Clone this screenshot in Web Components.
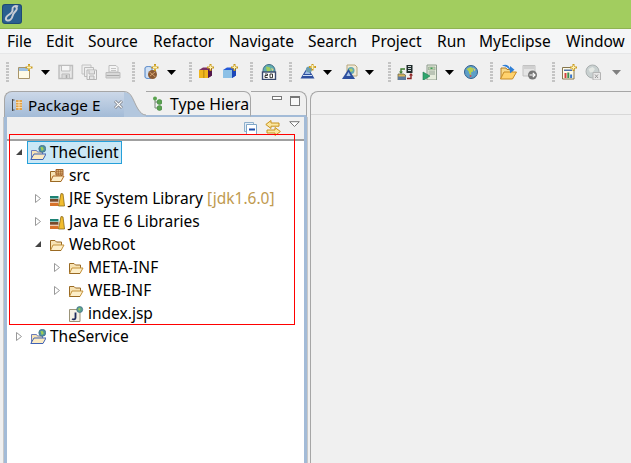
<!DOCTYPE html>
<html><head><meta charset="utf-8"><title>MyEclipse</title>
<style>
html,body{margin:0;padding:0;height:100%;overflow:hidden;background:#f0f0f0;font-family:"Noto Sans","Open Sans",sans-serif;font-size:15.5px;color:#000}
ide-app{height:463px}
</style></head><body>
<ide-app></ide-app>
<script>
const openFolder=(a='#c4923a')=>`<path d="M1.500 13.500V3.500h4.500l1.500 1.500h5V8" fill="#f7e3b5" stroke="#9a6a24"/><path d="M1.500 13.500L4 8h11l-3 5.500z" fill="#fdeec8" stroke="${a}" stroke-linejoin="round"/><path d="M1.500 13.500h10.500" stroke="#9a6a24"/>`;
const projFolder=`<path d="M1.500 14V5.500h5l1 1.500h5V9" fill="#f7e3b5" stroke="#6c7cb8"/><path d="M.8 14.500L4 9H16l-3 5.500z" fill="#fbeac2" stroke="#3f62b5" stroke-linejoin="round"/><circle cx="12.300" cy="3.800" r="3.500" fill="#4f93a0" stroke="#3d6a86" stroke-width=".7"/><path d="M10.500 2l2.500.2.700 2.500-2 1.200z" fill="#a3cf52"/>`;
const spark=(x,y)=>`<path d="M${x} ${y-3.500}v7M${x-3.500} ${y}h7" stroke="#c99a1d" stroke-width="2"/><path d="M${x} ${y-2}v4M${x-2} ${y}h4" stroke="#fff3b0" stroke-width="1"/>`;
const cube=(a,b,c)=>`<path d="M1 6l4-2.500h9v8L10 14H1z" fill="${a}"/><path d="M1 6h9v8H1z" fill="${b}"/><path d="M10 6l4-2.500v8L10 14z" fill="${c}"/>`;
const ICONS={
 newfile:`<path d="M1.500 3.500h11v11h-11z" fill="#fffbe6" stroke="#a8956a"/><path d="M2 4h10v3H2z" fill="#9cc0e4"/>${spark(12,3.500)}`,
 save:`<path d="M1 1.500h13.500v13H1z" fill="#e8e8e8" stroke="#bdbdbd" stroke-width="1.400"/><path d="M3.500 2v5h8.500V2" fill="#f6f6f6" stroke="#bdbdbd"/><path d="M4 10h7.500v4.500H4z" fill="#d8d8d8" stroke="#bdbdbd"/><path d="M8.500 11v3" stroke="#aaa" stroke-width="1.500"/>`,
 saveall:`<path d="M1 1h9v9H1z" fill="#eee" stroke="#c2c2c2"/><path d="M3.500 3.500h9v9h-9z" fill="#eee" stroke="#bcbcbc"/><path d="M6 6h9.500v9.500H6z" fill="#f2f2f2" stroke="#b5b5b5"/><path d="M8 6.500v3.500h5.500V6.500M8.500 12h4.500v3.500H8.500z" fill="#e4e4e4" stroke="#b5b5b5"/>`,
 print:`<path d="M4 1.500h7l2 2V8H4z" fill="#f4f4f4" stroke="#bdbdbd"/><path d="M6 4.500h5M6 6.500h5" stroke="#c4c4c4"/><path d="M1 8.500h14v5.500H1z" fill="#d8d8d8" stroke="#bdbdbd"/><path d="M1.500 11.500h13" stroke="#aaa"/>`,
 wsnew:`<path d="M2 4c0-2 7-2 7 0v9c0 2-7 2-7 0z" fill="#cfe0f4" stroke="#4b7fc4"/><circle cx="9.500" cy="10.500" r="4.500" fill="#8a5a33"/><path d="M6.500 8l6 5M7 12l5-4" stroke="#d9a878" stroke-width=".9"/>${spark(12,3.500)}`,
 pkg:`${cube('#7a2f63','#f0b51e','#52184b')}<path d="M5 6h1.500v8H5z" fill="#c89413"/>${spark(12.500,3.500)}`,
 cls:`${cube('#2459d8','#8cc0e6','#1c47b8')}${spark(12.500,3.500)}`,
 ws:`<circle cx="8" cy="6.500" r="6" fill="#62aeb0" stroke="#3d6a86"/><path d="M5 2.500l4 1 1 3-4 1.500z" fill="#a4cf59"/><path d="M10 4l2.500 1-1 2.500z" fill="#e7d480"/><rect x="1.500" y="8" width="13" height="7.500" fill="#fff" stroke="#3a4a6e" stroke-width="1.400"/><path d="M4 10h2.500v1.500H4v2h2.700M9 10h2.500v3.700H9z" fill="none" stroke="#222" stroke-width=".9"/>`,
 srv:`<path d="M7.500 3L14.500 14.500H.5z" fill="#2d4f9f"/><path d="M7.500 5l3 5H4.500z" fill="#9fbde6"/><path d="M3 11.500h9" stroke="#cfe0f4"/><circle cx="9" cy="5.500" r="3" fill="#6c9fb0"/>${spark(12.500,3)}`,
 browse:`<path d="M5 1h8l2 2v9H5z" fill="#f2ead6" stroke="#b6a67c"/><circle cx="9" cy="6.500" r="3.500" fill="#63a9b4"/><path d="M7 5l3-.5 1 2.500-3 1z" fill="#b3d068"/><path d="M6.500 5L13 15H0z" fill="#2d4f9f"/><path d="M6.500 8l2.200 4H4.300z" fill="#aac6ea"/>`,
 deploy:`<path d="M9.500 1h6v8h-6z" fill="#1f2a2a"/><path d="M11 2.500h3M11 4.500h3M11 6.500h3" stroke="#cfd8d8"/><path d="M8 5H4v3" fill="none" stroke="#3e7d2e" stroke-width="1.400"/><path d="M2 7.500h4l-2 2.500z" fill="#3e7d2e"/><path d="M1 10h6l1 1h.5v5H1z" fill="#d9b45a" stroke="#6d6a4d" stroke-width=".8"/><path d="M1 12.500h8v3.500H1z" fill="#5f7a9c"/><path d="M10 14.500h4V11" fill="none" stroke="#8a2020" stroke-width="1.400"/><path d="M12 11.500h4L14 9z" fill="#8a2020"/>`,
 run:`<path d="M5 1h9.500v15H5z" fill="#e6ecdc" stroke="#8e9c8e"/><path d="M6.500 3h6.500v3H6.500z" fill="#bcd3ae" stroke="#8e9c8e" stroke-width=".6"/><path d="M6.500 8h6.500M6.500 10h6.500" stroke="#8e9c8e"/><path d="M8.500 3.500h2v1.500h-2z" fill="#3d9d5a"/><path d="M1 8l7 4-7 4.500z" fill="#2fa56d" stroke="#1d7a4d" stroke-width=".6"/>`,
 globe:`<circle cx="8" cy="8" r="6.500" fill="#5d9fc8" stroke="#34608e"/><path d="M3.500 5l4-2 3 1.500-.5 3-2 1 .5 2.500-2-1-1-3z" fill="#b5cf4f"/><path d="M10 3.500l2.500 2-1 2z" fill="#e3cb70"/><circle cx="7.500" cy="12" r="1" fill="#d25252"/>`,
 open:`<path d="M2 16V5h5l1 1.500h5V9" fill="#f8d98a" stroke="#b17f27"/><path d="M1.500 16L5 9h12.500l-4 7z" fill="#ffd26d" stroke="#c78b24" stroke-linejoin="round"/><path d="M3 2.500c4-1.500 6.500-.5 8 3V3l4.500 3.700-4.500 3.500V8c-1.500-3.500-4-4.500-8-5.500z" fill="#2f7fd6"/>`,
 nav:`<path d="M1 1.500h12V12H1z" fill="#e4e4e4" stroke="#c2c2c2"/><path d="M1.500 2h11v3h-11z" fill="#d0d0d0"/><circle cx="10.500" cy="11" r="4.500" fill="#777"/><path d="M7.500 11h5.500M10.800 8.800L13 11l-2.200 2.200" fill="none" stroke="#fff" stroke-width="1.200"/>`,
 report:`<path d="M1.500 3.500h11.500v11.500H1.500z" fill="#fffbe6" stroke="#85764e"/><path d="M3 5.500h8v1.500H3z" fill="#4f6ea6"/><path d="M3.500 9h2v5h-2z" fill="#d23f3f"/><path d="M6.300 8.500h2V14h-2z" fill="#3c8f4e"/><path d="M9.100 10.500h2V14h-2z" fill="#3b74c9"/>${spark(12.500,3.500)}`,
 switchd:`<circle cx="7.500" cy="7.500" r="6.500" fill="#c8d0d0" stroke="#aab0b0"/><path d="M3.500 5l4-2 2.500 2-2 3-3 .5z" fill="#e4e8e4"/><path d="M8 8.500h7.500V16H8z" fill="#e8e8e8" stroke="#b4b4b4"/><path d="M10 10.500l3 3.500M13 10.500l-3 3.500" stroke="#999"/>`,
 project:projFolder,
 src:`${openFolder('#b06a24')}<path d="M7 1.500h7v5.500H7z" fill="#e9c58b" stroke="#9c5b22"/><path d="M7 3.300h7M7 5.200h7M9.300 1.500V7M11.700 1.500V7" stroke="#9c5b22" stroke-width=".7"/>`,
 lib:`<path d="M1 5h8.500v3H1z" fill="#1d8274"/><path d="M1 8h8.500v3H1z" fill="#7a4a2a"/><path d="M1 11.500h8.500V15H1z" fill="#d7722b"/><path d="M1 7.500h8.500M1 11h8.500" stroke="#fff" stroke-width=".5"/><path d="M9.500 15L12 2.500l2 .4L15.500 15z" fill="#f2bd2e" stroke="#8c6a16" stroke-width=".8"/>`,
 folder:openFolder(),
 jsp:`<path d="M1.500 3.500h10.500v12H1.500z" fill="#f4f1e6" stroke="#9c9479"/><path d="M7.500 6.500v5.500c0 1.700-2.500 1.700-3.300.7" fill="none" stroke="#1d2a5c" stroke-width="1.800"/><circle cx="11.700" cy="3.500" r="3" fill="#5aa090" stroke="#3d6a86" stroke-width=".7"/><path d="M10.500 2l2 .5-.5 2-1.500-.5z" fill="#a6cc54"/>`,
 tabpkg:`<path d="M.5 0v12M.5 1h2M.5 11h2" stroke="#4a4a4a" fill="none"/><path d="M4 1h6v10H4z" fill="#e3a248"/><path d="M4 3.500h6M4 6h6M4 8.500h6M7 1v10" stroke="#fbe9c6" stroke-width=".8"/>`,
 tabtype:`<path d="M3 3v9h3M3 6h3" fill="none" stroke="#7a8a7a"/><circle cx="3" cy="2.500" r="2" fill="#5aa34f"/><circle cx="7.500" cy="6" r="2.500" fill="#5aa34f" stroke="#3a7a3a" stroke-width=".5"/><circle cx="7.500" cy="12" r="2.500" fill="#5aa34f" stroke="#3a7a3a" stroke-width=".5"/>`,
 close:`<path d="M2 2l7 7M9 2l-7 7" stroke="#8a8f98" stroke-width="3"/><path d="M2.300 2.300l6.400 6.400M8.700 2.300l-6.400 6.400" stroke="#fff" stroke-width="1.200"/>`,
 collapse:`<path d="M.5 .5h9v9h-9z" fill="#e6eef6" stroke="#8fb0cc"/><path d="M2.500 2.500h10v10h-10z" fill="#fff" stroke="#7fa6c8"/><path d="M5 7.500h6" stroke="#1f4fa8" stroke-width="2"/>`,
 link:`<path d="M6 .5L.8 4.500 6 8.500V6.200h8V3H6z" fill="#fbe7a0" stroke="#c8921c"/><path d="M10 7.500l5.400 4-5.400 4V13H2v-3h8z" fill="#fbe7a0" stroke="#c8921c"/>`,
 viewmenu:`<path d="M.7 .7h9.600L5.500 5.500z" fill="#fff" stroke="#777"/>`
};
const VB={close:[11,11],collapse:[13,13],tabpkg:[12,12],tabtype:[10,15],viewmenu:[11,6],open:[18,17]};
class IdeIcon extends HTMLElement{
 connectedCallback(){
  const n=this.getAttribute('name');const [w,h]=VB[n]||[16,16];
  const r=this.attachShadow({mode:'open'});
  r.innerHTML=`<style>:host{display:block;flex:none;width:${w}px;height:${h}px;line-height:0}svg{display:block}</style><svg xmlns="http://www.w3.org/2000/svg" width="${w}" height="${h}" viewBox="0 0 ${w} ${h}">${ICONS[n]}</svg>`;
 }
}
class TitleBar extends HTMLElement{constructor(){super();this.attachShadow({mode:'open'}).innerHTML=`<style>:host{display:flex;align-items:center;height:28px;background:#a2cd5f;border-bottom:1px solid #8fb353;padding-left:2px}</style>
<svg width="20" height="20" viewBox="0 0 20 20"><rect width="20" height="20" rx="3" fill="#1f4a75"/><rect x="1" y="1" width="18" height="18" rx="2.500" fill="#2a5f8f"/><path d="M16 2.500c-3-1.500-6 .5-5.500 3 .4 2-1.500 4-4 5.500-3 1.800-3.500 5-1 5.500 2.500.4 4.500-2 5-4.500.4-2.500 2-4 3.500-5.500 1.200-1.400 1-3.300-.5-3.700" fill="none" stroke="#c8ccd4" stroke-width="2"/></svg>`}}
class MenuBar extends HTMLElement{constructor(){super();this.attachShadow({mode:'open'}).innerHTML=`<style>:host{display:flex;height:24px;align-items:center;background:#f5f6f7;border-bottom:1px solid #e6e7e8;padding-left:7px;white-space:nowrap}</style><slot></slot>`}}
class MenuItem extends HTMLElement{constructor(){super();this.attachShadow({mode:'open'}).innerHTML=`<style>:host{display:block;flex:none}</style><slot></slot>`}}
class ToolBar extends HTMLElement{constructor(){super();this.attachShadow({mode:'open'}).innerHTML=`<style>:host{display:flex;height:35px;align-items:center;background:#f0f0f0;padding-left:6px;box-sizing:border-box}</style><slot></slot>`}}
class ToolGrip extends HTMLElement{constructor(){super();this.attachShadow({mode:'open'}).innerHTML=`<style>:host{display:block;flex:none;width:3px;height:21px;margin-top:2px;background:repeating-linear-gradient(#c4c4c4 0 2px,#f0f0f0 2px 3px)}</style>`}}
class ToolDrop extends HTMLElement{constructor(){super();const c=this.hasAttribute('dim')?'#808080':'#000';this.attachShadow({mode:'open'}).innerHTML=`<style>:host{display:block;flex:none;line-height:0;margin-top:1px}</style><svg width="9" height="5" viewBox="0 0 9 5" style="display:block"><path d="M0 0h9L4.500 5z" fill="${c}"/></svg>`}}
class ViewPart extends HTMLElement{constructor(){super();this.attachShadow({mode:'open'}).innerHTML=`<style>
:host{display:flex;flex-direction:column;flex:none;width:303px;height:372px;box-sizing:border-box;font-size:15.3px}
.head{display:flex;height:26px;flex:none}
.active{width:120px;flex:none;display:flex;align-items:center;box-sizing:border-box;background:linear-gradient(#ccd8e8,#a3bbd7);border:1px solid #a6a6a6;border-width:1px 0 0 1px;border-top-left-radius:8px;padding-left:7px}
.active .lbl{margin-left:4px;width:87px;white-space:nowrap}
.curve{flex:none;display:block}
.inactive{width:105px;flex:none;display:flex;align-items:center;box-sizing:border-box;border-top:1px solid #a6a6a6;border-right:1px solid #a6a6a6;border-bottom:2px solid #a3bbd7;border-top-right-radius:7px;padding-left:6px;white-space:nowrap;font-size:15.8px}
.inactive .lbl{margin-left:8px}
.rest{flex:1;display:flex;justify-content:flex-end;gap:8px;box-sizing:border-box;border-top:1px solid #a6a6a6;border-right:1px solid #a6a6a6;border-bottom:2px solid #a3bbd7;border-top-right-radius:8px;padding:4px 6px 0 0}
.min{width:10px;height:4px;border:1px solid #777;box-sizing:border-box;background:#fff}
.max{width:10px;height:10px;border:1px solid #777;box-sizing:border-box;border-top-width:2px;background:#f8f8f8}
.body{flex:1;display:flex;flex-direction:column;border-left:3px solid #a3bbd7;border-right:3px solid #a3bbd7;min-height:0;background:#fff;box-shadow:-1px 0 0 #c8c8c8,1px 0 0 #c8c8c8}
.tools{flex:none;background:#f0f0f0;border-bottom:2px solid #a0a0a0;display:flex;align-items:flex-start;justify-content:flex-end;height:22px}
.tree{flex:1;overflow:hidden}
</style>
<div class="head"><div class="active"><ide-icon name="tabpkg"></ide-icon><span class="lbl">Package E</span><ide-icon name="close"></ide-icon></div>
<svg class="curve" width="22" height="26" viewBox="0 0 22 26"><path d="M0 1C8 1 9 10 14 18c2.500 4 5 6 8 6v2H0z" fill="#b3c7de"/><path d="M0 .5C8 .5 9 10 14 18c2.500 4 5 6 8 6" fill="none" stroke="#a6a6a6"/></svg>
<div class="inactive"><ide-icon name="tabtype"></ide-icon><span class="lbl">Type Hiera</span></div>
<div class="rest"><div class="min"></div><div class="max"></div></div></div>
<div class="body"><div class="tools"><ide-icon name="collapse" style="margin:5px 8px 0 0"></ide-icon><ide-icon name="link" style="margin:3px 8px 0 0"></ide-icon><ide-icon name="viewmenu" style="margin:4px 4px 0 0"></ide-icon></div>
<div class="tree"><slot></slot></div></div>`}}
class TreeRow extends HTMLElement{constructor(){super();
 const lvl=+this.getAttribute('level')||0,tw=this.getAttribute('twisty')||'',ic=this.getAttribute('icon'),sel=this.hasAttribute('selected');
 const t=tw==='open'?`<path d="M1 7L7 1v6z" fill="#444"/>`:tw==='closed'?`<path d="M1.500 .5L6.500 4.500 1.500 8.500z" fill="#fff" stroke="#999"/>`:'';
 this.attachShadow({mode:'open'}).innerHTML=`<style>
 :host{display:flex;height:23px;align-items:center;padding-left:${8+lvl*19}px;white-space:nowrap;font-size:15.5px}
 svg.t{flex:none;margin-right:6px}
 .item{display:flex;align-items:center;height:23px;box-sizing:border-box;margin-left:${sel?-2:0}px;padding:0 ${sel?2:0}px;border:1px solid ${sel?'#26a0da':'transparent'};background:${sel?'#cbe8f6':'transparent'}}
 .lbl{margin-left:4px;padding-bottom:1px}
 ::slotted(span){color:#c09a50}
 </style><svg class="t" width="8" height="9" viewBox="0 0 8 9">${t}</svg><div class="item"><ide-icon name="${ic}"></ide-icon><span class="lbl"><slot></slot></span></div>`}}
class EditorArea extends HTMLElement{constructor(){super();this.attachShadow({mode:'open'}).innerHTML=`<style>:host{display:block;flex:1;border:1px solid #a6a6a6;border-width:1px 0 0 1px;border-top-left-radius:8px;background:#f0f0f0;margin-left:3px}.l{height:22px;border-bottom:1px solid #d8d8d8}</style><div class="l"></div>`}}
class RedBox extends HTMLElement{constructor(){super();this.attachShadow({mode:'open'}).innerHTML=`<style>:host{position:absolute;left:9px;top:134px;width:286px;height:191px;box-sizing:border-box;border:1px solid #f00;pointer-events:none}</style>`}}
class IdeApp extends HTMLElement{constructor(){super();this.attachShadow({mode:'open'}).innerHTML=`<style>:host{display:flex;flex-direction:column;position:relative;overflow:hidden;width:631px}.main{display:flex;flex:1;padding:2px 0 0 4px;background:#f0f0f0;min-height:0}</style>
<title-bar></title-bar>
<slot name="menu"></slot><slot name="tools"></slot>
<div class="main"><slot></slot></div><red-box></red-box>`}}
[['ide-icon',IdeIcon],['title-bar',TitleBar],['menu-bar',MenuBar],['menu-item',MenuItem],['tool-bar',ToolBar],['tool-grip',ToolGrip],['tool-drop',ToolDrop],['view-part',ViewPart],['tree-row',TreeRow],['editor-area',EditorArea],['red-box',RedBox],['ide-app',IdeApp]].forEach(([n,c])=>customElements.define(n,c));
const tools=[['g',0],['newfile',8],['d',8],['save',8],['saveall',7],['print',8],['g',11],['wsnew',8],['d',8],['g',13],['pkg',6],['cls',8],['g',12],['ws',8],['g',12],['srv',8],['d',7],['browse',10],['d',7],['g',14],['deploy',6],['run',9],['d',7],['globe',9],['g',11],['open',6],['nav',5],['g',14],['report',6],['switchd',8],['dd',11]];
const tb=tools.map(([n,m])=>{const st=`style="margin-left:${m}px"`;return n==='g'?`<tool-grip ${st}></tool-grip>`:n==='d'?`<tool-drop ${st}></tool-drop>`:n==='dd'?`<tool-drop dim ${st}></tool-drop>`:`<ide-icon name="${n}" ${st}></ide-icon>`}).join('');
const menus=[['File',39],['Edit',42],['Source',65],['Refactor',76],['Navigate',79],['Search',63],['Project',66],['Run',42],['MyEclipse',87],['Window',60]];
const app=document.querySelector('ide-app');
app.innerHTML=`<menu-bar slot="menu">${menus.map(([t,w])=>`<menu-item style="width:${w}px">${t}</menu-item>`).join('')}</menu-bar>
<tool-bar slot="tools">${tb}</tool-bar>
<view-part>
<tree-row level="0" twisty="open" icon="project" selected>TheClient</tree-row>
<tree-row level="1" icon="src">src</tree-row>
<tree-row level="1" twisty="closed" icon="lib">JRE System Library <span>[jdk1.6.0]</span></tree-row>
<tree-row level="1" twisty="closed" icon="lib">Java EE 6 Libraries</tree-row>
<tree-row level="1" twisty="open" icon="folder">WebRoot</tree-row>
<tree-row level="2" twisty="closed" icon="folder">META-INF</tree-row>
<tree-row level="2" twisty="closed" icon="folder">WEB-INF</tree-row>
<tree-row level="2" icon="jsp">index.jsp</tree-row>
<tree-row level="0" twisty="closed" icon="project">TheService</tree-row>
</view-part>
<editor-area></editor-area>`;
</script>
</body></html>
